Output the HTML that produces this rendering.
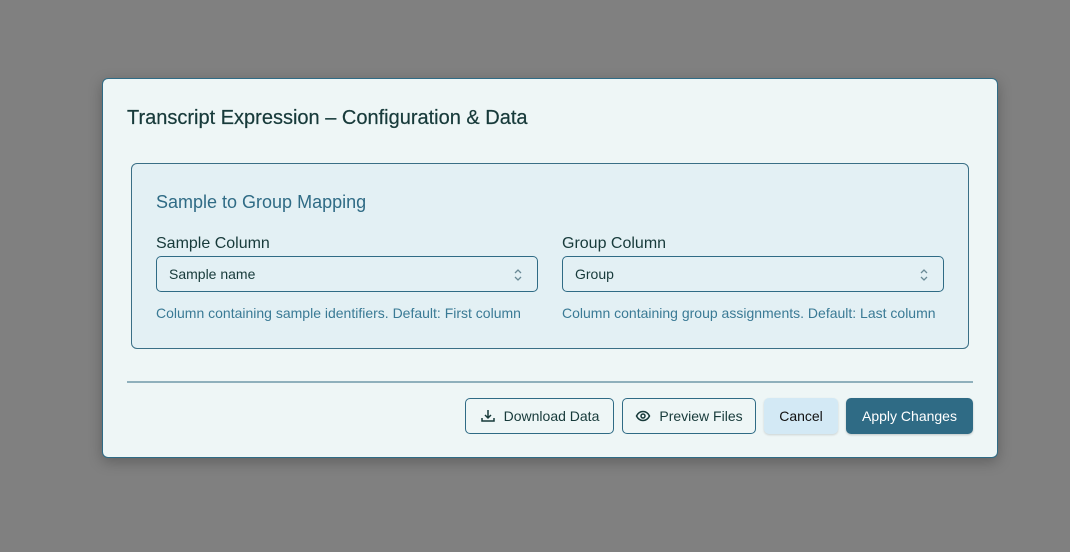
<!DOCTYPE html>
<html><head><meta charset="utf-8"><style>
*{box-sizing:border-box;margin:0;padding:0}
body{width:1070px;height:552px;background:#808080;font-family:"Liberation Sans","DejaVu Sans",sans-serif;position:relative;overflow:hidden}
.dlg{position:absolute;left:102px;top:78px;width:896px;height:380px;background:#eef6f6;border:1px solid #2f6b85;border-radius:6px;box-shadow:0 4px 14px rgba(0,0,0,.25)}
.t{position:absolute;left:24px;top:28px;font-size:20px;color:#173a3a;-webkit-text-stroke:0.2px #173a3a}
.panel{position:absolute;left:28px;top:84px;width:838px;height:186px;background:#e3f0f4;border:1px solid #3a6f86;border-radius:6px}
.st{position:absolute;left:24px;top:28px;font-size:18px;color:#2f6b85}
.lbl{position:absolute;top:71px;font-size:16px;color:#173a3a}
.sel{position:absolute;top:92px;width:382px;height:36px;border:1px solid #2f6b85;border-radius:5px;font-size:14px;color:#173a3a;padding:9px 12px}
.sel svg{position:absolute;right:14px;top:11px}
.help{position:absolute;top:141px;font-size:14px;color:#3a7a95}
.hr{position:absolute;left:24px;top:302px;width:846px;height:2px;background:#8fb0bc}
.btn{position:absolute;top:319px;height:36px;border-radius:5px;font-size:14px;display:flex;align-items:center;justify-content:center;gap:8px}
.o{border:1px solid #2f6b85;color:#173a3a;background:#eef6f6}
</style></head><body>
<div class="dlg">
<div class="t">Transcript Expression – Configuration &amp; Data</div>
<div class="panel">
<div class="st">Sample to Group Mapping</div>
<div class="lbl" style="left:24px">Sample Column</div>
<div class="lbl" style="left:430px">Group Column</div>
<div class="sel" style="left:24px">Sample name<svg width="10" height="14" viewBox="0 0 10 14"><path d="M2 5l3-3 3 3M2 9l3 3 3-3" fill="none" stroke="#6a8a96" stroke-width="1.3"/></svg></div>
<div class="sel" style="left:430px">Group<svg width="10" height="14" viewBox="0 0 10 14"><path d="M2 5l3-3 3 3M2 9l3 3 3-3" fill="none" stroke="#6a8a96" stroke-width="1.3"/></svg></div>
<div class="help" style="left:24px">Column containing sample identifiers. Default: First column</div>
<div class="help" style="left:430px">Column containing group assignments. Default: Last column</div>
</div>
<div class="hr"></div>
<div class="btn o" style="left:362px;width:149px"><svg width="16" height="16" viewBox="0 0 16 16" fill="none" stroke="#173a3a" stroke-width="1.5"><path d="M8 2v8M5 7l3 3 3-3M2 10v3h12v-3"/></svg>Download Data</div>
<div class="btn o" style="left:519px;width:134px"><svg width="16" height="16" viewBox="0 0 16 16" fill="none" stroke="#173a3a" stroke-width="1.5"><path d="M1.5 8C3 5 5.5 3.5 8 3.5S13 5 14.5 8C13 11 10.5 12.5 8 12.5S3 11 1.5 8z"/><circle cx="8" cy="8" r="2"/></svg>Preview Files</div>
<div class="btn" style="left:661px;width:74px;background:#d3e9f5;color:#111;box-shadow:0 1px 2px rgba(0,0,0,.15)">Cancel</div>
<div class="btn" style="left:743px;width:127px;background:#2f6b85;color:#fff;box-shadow:0 1px 2px rgba(0,0,0,.2)">Apply Changes</div>
</div>
</body></html>
